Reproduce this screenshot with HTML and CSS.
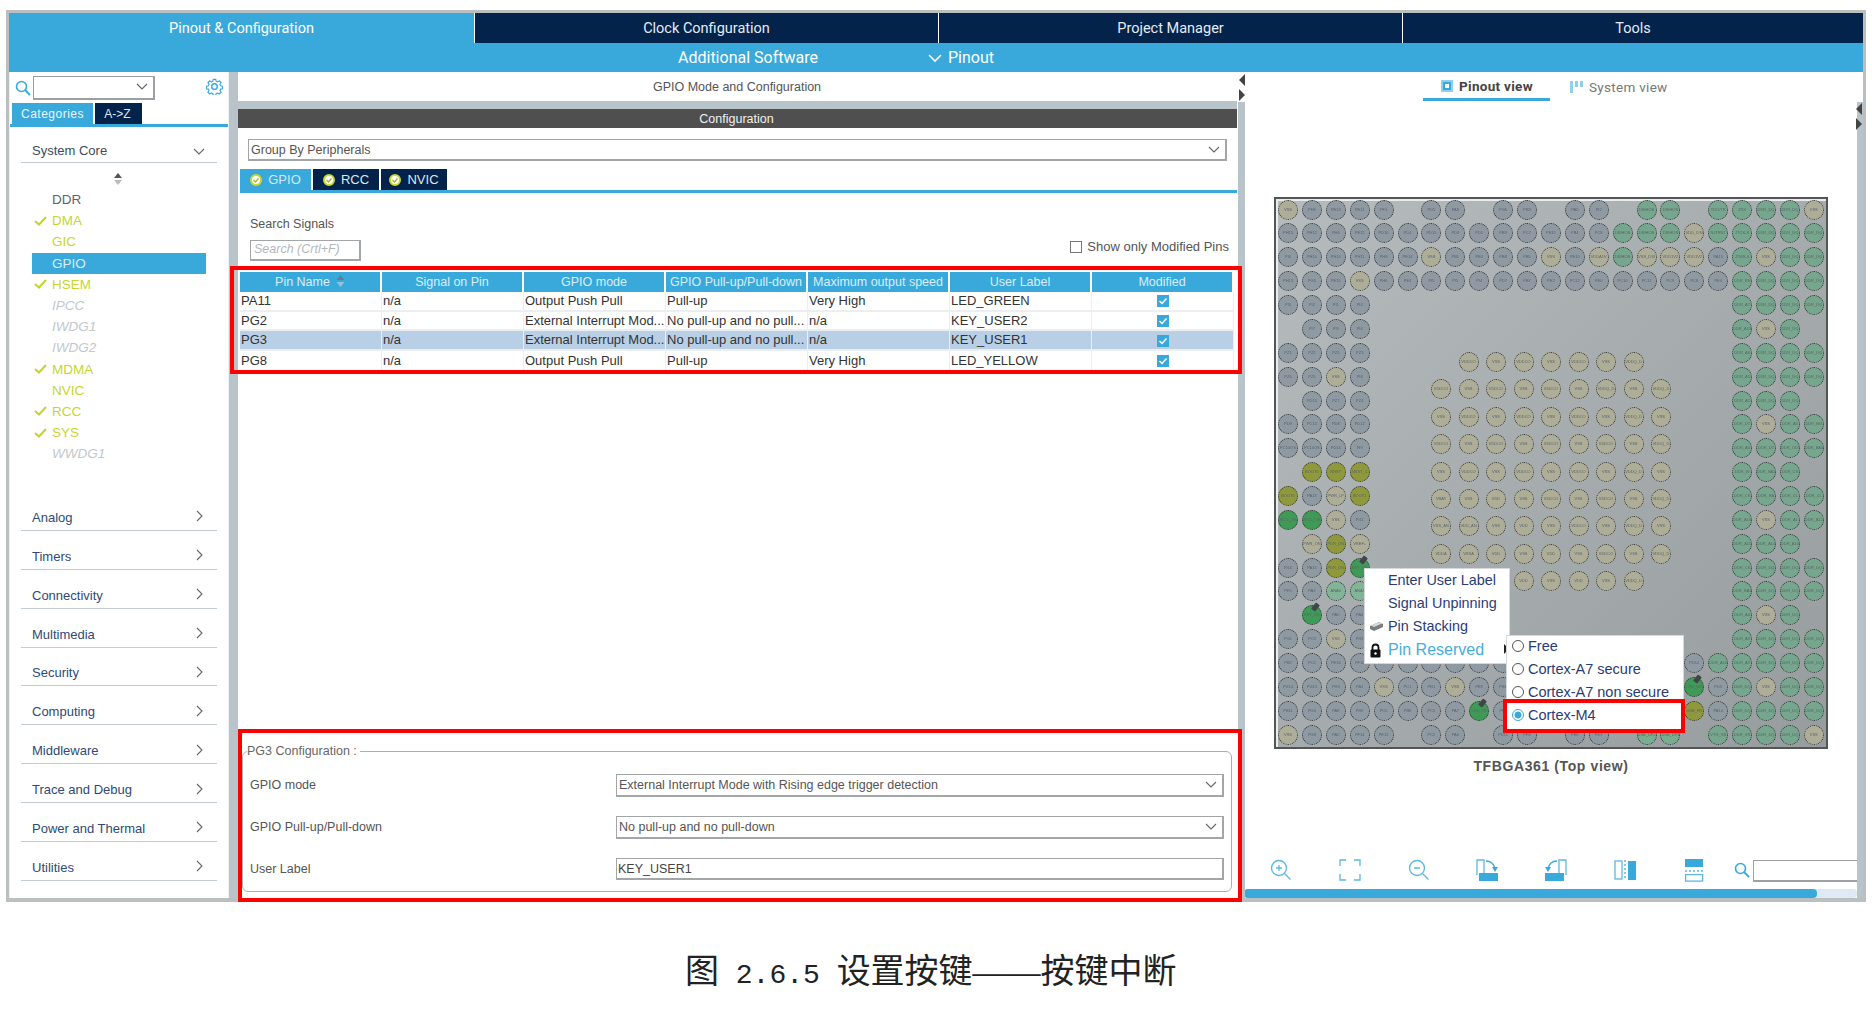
FILE: index.html
```html
<!DOCTYPE html>
<html lang="zh">
<head>
<meta charset="utf-8">
<title>GPIO Mode and Configuration</title>
<link rel="stylesheet" href="styles.css">
</head>
<body>
<div class="frame">
  <nav class="main-tabs">
    <div class="main-tab active">Pinout &amp; Configuration</div>
    <div class="main-tab">Clock Configuration</div>
    <div class="main-tab">Project Manager</div>
    <div class="main-tab">Tools</div>
  </nav>
  <div class="sub-bar">
    <span class="sub-software">Additional Software</span>
    <span class="sub-pinout"><svg width="14" height="10" viewBox="0 0 14 10"><path d="M1 2l6 6 6-6" fill="none" stroke="#fff" stroke-width="1.6"/></svg>Pinout</span>
  </div>
  <div class="workspace">
    <aside class="left-panel">
      <div class="search-row">
        <svg class="search-icon" width="16" height="16" viewBox="0 0 16 16"><circle cx="6.5" cy="6.5" r="5" fill="none" stroke="#39a9dc" stroke-width="1.6"/><path d="M10 10l5 5" stroke="#39a9dc" stroke-width="1.8"/></svg>
        <div class="combo"><svg width="12" height="8" viewBox="0 0 12 8"><path d="M1 1l5 5 5-5" fill="none" stroke="#666" stroke-width="1.2"/></svg></div>
        <svg class="gear" width="17" height="17" viewBox="0 0 24 24"><path d="M10 1.5h4l.6 3 2.3 1 2.6-1.7 2.8 2.8-1.7 2.6 1 2.3 3 .6v4l-3 .6-1 2.3 1.7 2.6-2.8 2.8-2.6-1.7-2.3 1-.6 3h-4l-.6-3-2.3-1-2.6 1.7-2.8-2.8 1.7-2.6-1-2.3-3-.6v-4l3-.6 1-2.3L1.7 6.6l2.8-2.8 2.6 1.7 2.3-1z" transform="translate(1.2 .6) scale(.9)" fill="none" stroke="#39a9dc" stroke-width="1.8"/><circle cx="12" cy="12" r="4" fill="none" stroke="#39a9dc" stroke-width="2"/></svg>
      </div>
      <div class="side-tabs">
        <span class="side-tab on">Categories</span>
        <span class="side-tab">A-&gt;Z</span>
      </div>
      <div class="accordion">
        <div class="cat-head first">System Core<svg width="12" height="8" viewBox="0 0 12 8"><path d="M1 1l5 5 5-5" fill="none" stroke="#666" stroke-width="1.1"/></svg></div>
        <div class="sorter"><svg width="10" height="12" viewBox="0 0 10 12"><path d="M5 0l4 5H1z" fill="#555"/><path d="M5 12L1 7h8z" fill="#bbb"/></svg></div>
        <ul class="ip-list">
          <li class="ip"><span class="ip-check"></span>DDR</li>
          <li class="ip ok"><span class="ip-check"><svg width="13" height="10" viewBox="0 0 13 10"><path d="M1 5l4 3.5L12 1" fill="none" stroke="#c3d52b" stroke-width="2"/></svg></span>DMA</li>
          <li class="ip ok"><span class="ip-check"></span>GIC</li>
          <li class="ip sel"><span class="ip-check"></span>GPIO</li>
          <li class="ip ok"><span class="ip-check"><svg width="13" height="10" viewBox="0 0 13 10"><path d="M1 5l4 3.5L12 1" fill="none" stroke="#c3d52b" stroke-width="2"/></svg></span>HSEM</li>
          <li class="ip off"><span class="ip-check"></span>IPCC</li>
          <li class="ip off"><span class="ip-check"></span>IWDG1</li>
          <li class="ip off"><span class="ip-check"></span>IWDG2</li>
          <li class="ip ok"><span class="ip-check"><svg width="13" height="10" viewBox="0 0 13 10"><path d="M1 5l4 3.5L12 1" fill="none" stroke="#c3d52b" stroke-width="2"/></svg></span>MDMA</li>
          <li class="ip ok"><span class="ip-check"></span>NVIC</li>
          <li class="ip ok"><span class="ip-check"><svg width="13" height="10" viewBox="0 0 13 10"><path d="M1 5l4 3.5L12 1" fill="none" stroke="#c3d52b" stroke-width="2"/></svg></span>RCC</li>
          <li class="ip ok"><span class="ip-check"><svg width="13" height="10" viewBox="0 0 13 10"><path d="M1 5l4 3.5L12 1" fill="none" stroke="#c3d52b" stroke-width="2"/></svg></span>SYS</li>
          <li class="ip off"><span class="ip-check"></span>WWDG1</li>
        </ul>
        <div class="cats">
          <div class="cat-head">Analog<svg width="8" height="12" viewBox="0 0 8 12"><path d="M1 1l5 5-5 5" fill="none" stroke="#666" stroke-width="1.1"/></svg></div>
          <div class="cat-head">Timers<svg width="8" height="12" viewBox="0 0 8 12"><path d="M1 1l5 5-5 5" fill="none" stroke="#666" stroke-width="1.1"/></svg></div>
          <div class="cat-head">Connectivity<svg width="8" height="12" viewBox="0 0 8 12"><path d="M1 1l5 5-5 5" fill="none" stroke="#666" stroke-width="1.1"/></svg></div>
          <div class="cat-head">Multimedia<svg width="8" height="12" viewBox="0 0 8 12"><path d="M1 1l5 5-5 5" fill="none" stroke="#666" stroke-width="1.1"/></svg></div>
          <div class="cat-head">Security<svg width="8" height="12" viewBox="0 0 8 12"><path d="M1 1l5 5-5 5" fill="none" stroke="#666" stroke-width="1.1"/></svg></div>
          <div class="cat-head">Computing<svg width="8" height="12" viewBox="0 0 8 12"><path d="M1 1l5 5-5 5" fill="none" stroke="#666" stroke-width="1.1"/></svg></div>
          <div class="cat-head">Middleware<svg width="8" height="12" viewBox="0 0 8 12"><path d="M1 1l5 5-5 5" fill="none" stroke="#666" stroke-width="1.1"/></svg></div>
          <div class="cat-head">Trace and Debug<svg width="8" height="12" viewBox="0 0 8 12"><path d="M1 1l5 5-5 5" fill="none" stroke="#666" stroke-width="1.1"/></svg></div>
          <div class="cat-head">Power and Thermal<svg width="8" height="12" viewBox="0 0 8 12"><path d="M1 1l5 5-5 5" fill="none" stroke="#666" stroke-width="1.1"/></svg></div>
          <div class="cat-head">Utilities<svg width="8" height="12" viewBox="0 0 8 12"><path d="M1 1l5 5-5 5" fill="none" stroke="#666" stroke-width="1.1"/></svg></div>
        </div>
      </div>
    </aside>
    <div class="gutter gutter-left"></div>
    <main class="center">
      <div class="center-title">GPIO Mode and Configuration</div>
      <div class="center-gap"></div>
      <div class="config-bar">Configuration</div>
      <div class="center-body">
        <div class="select group-select"><span>Group By Peripherals</span><svg width="12" height="8" viewBox="0 0 12 8"><path d="M1 1l5 5 5-5" fill="none" stroke="#666" stroke-width="1.1"/></svg></div>
        <div class="ip-tabs">
          <span class="ip-tab on"><svg width="12" height="12" viewBox="0 0 12 12"><circle cx="6" cy="6" r="5" fill="#fff" stroke="#c9d92f" stroke-width="2"/><path d="M3.5 6l2 2 3-3.6" fill="none" stroke="#a7b52a" stroke-width="1.4"/></svg>GPIO</span>
          <span class="ip-tab"><svg width="12" height="12" viewBox="0 0 12 12"><circle cx="6" cy="6" r="5" fill="#fff" stroke="#c9d92f" stroke-width="2"/><path d="M3.5 6l2 2 3-3.6" fill="none" stroke="#a7b52a" stroke-width="1.4"/></svg>RCC</span>
          <span class="ip-tab"><svg width="12" height="12" viewBox="0 0 12 12"><circle cx="6" cy="6" r="5" fill="#fff" stroke="#c9d92f" stroke-width="2"/><path d="M3.5 6l2 2 3-3.6" fill="none" stroke="#a7b52a" stroke-width="1.4"/></svg>NVIC</span>
        </div>
        <div class="search-signals">
          <div class="search-left">
            <div class="search-label">Search Signals</div>
            <div class="search-box">Search (Crtl+F)</div>
          </div>
          <label class="modified"><span class="box"></span>Show only Modified Pins</label>
        </div>
        <table class="pins-table">
          <thead>
            <tr><th>Pin Name<svg class="th-sort" width="9" height="12" viewBox="0 0 9 12"><path d="M4.5 0l4 5h-8z" fill="#5e7f95"/><path d="M4.5 12l-4-5h8z" fill="#8fc3de"/></svg></th><th>Signal on Pin</th><th>GPIO mode</th><th>GPIO Pull-up/Pull-down</th><th>Maximum output speed</th><th>User Label</th><th>Modified</th></tr>
          </thead>
          <tbody>
            <tr><td>PA11</td><td>n/a</td><td>Output Push Pull</td><td>Pull-up</td><td>Very High</td><td>LED_GREEN</td><td class="mod"><span class="tick"><svg width="12" height="12" viewBox="0 0 12 12"><path d="M2.5 6l2.5 2.5 4.5-5" fill="none" stroke="#fff" stroke-width="1.4"/></svg></span></td></tr>
            <tr><td>PG2</td><td>n/a</td><td>External Interrupt Mod...</td><td>No pull-up and no pull...</td><td>n/a</td><td>KEY_USER2</td><td class="mod"><span class="tick"><svg width="12" height="12" viewBox="0 0 12 12"><path d="M2.5 6l2.5 2.5 4.5-5" fill="none" stroke="#fff" stroke-width="1.4"/></svg></span></td></tr>
            <tr class="picked"><td>PG3</td><td>n/a</td><td>External Interrupt Mod...</td><td>No pull-up and no pull...</td><td>n/a</td><td>KEY_USER1</td><td class="mod"><span class="tick"><svg width="12" height="12" viewBox="0 0 12 12"><path d="M2.5 6l2.5 2.5 4.5-5" fill="none" stroke="#fff" stroke-width="1.4"/></svg></span></td></tr>
            <tr><td>PG8</td><td>n/a</td><td>Output Push Pull</td><td>Pull-up</td><td>Very High</td><td>LED_YELLOW</td><td class="mod"><span class="tick"><svg width="12" height="12" viewBox="0 0 12 12"><path d="M2.5 6l2.5 2.5 4.5-5" fill="none" stroke="#fff" stroke-width="1.4"/></svg></span></td></tr>
          </tbody>
        </table>
        <fieldset class="pin-config">
          <legend>PG3 Configuration :</legend>
          <div class="cfg-row"><span class="cfg-label">GPIO mode</span><div class="select cfg-field"><span>External Interrupt Mode with Rising edge trigger detection</span><svg width="12" height="8" viewBox="0 0 12 8"><path d="M1 1l5 5 5-5" fill="none" stroke="#666" stroke-width="1.1"/></svg></div></div>
          <div class="cfg-row"><span class="cfg-label">GPIO Pull-up/Pull-down</span><div class="select cfg-field"><span>No pull-up and no pull-down</span><svg width="12" height="8" viewBox="0 0 12 8"><path d="M1 1l5 5 5-5" fill="none" stroke="#666" stroke-width="1.1"/></svg></div></div>
          <div class="cfg-row"><span class="cfg-label">User Label</span><div class="select cfg-field text-field"><span>KEY_USER1</span></div></div>
        </fieldset>
      </div>
    </main>
    <div class="gutter gutter-mid"><div class="gutter-cap"><i class="tri-l"></i><i class="tri-r"></i></div></div>
    <section class="right">
      <div class="view-tabs">
        <span class="view-tab on"><svg width="14" height="14" viewBox="0 0 14 14"><rect x="1" y="1" width="12" height="12" fill="#8fd0ee"/><rect x="3" y="3" width="8" height="8" fill="#39a9dc"/><rect x="5" y="5" width="4" height="4" fill="#fff"/></svg>Pinout view</span>
        <span class="view-tab"><svg width="14" height="14" viewBox="0 0 14 14"><path d="M1 1h3v12H1z" fill="#8fd0ee"/><path d="M6 1h3v6H6zM11 1h3v6h-3z" fill="#8fd0ee"/></svg>System view</span>
      </div>
      <div class="chip" id="chip"></div>
      <div class="chip-name">TFBGA361 (Top view)</div>
      <div class="toolbar">
        <span class="tool"><svg width="24" height="24" viewBox="0 0 24 24" fill="none" stroke="#5bb8e3" stroke-width="1.3"><circle cx="10" cy="10" r="7.5"/><path d="M15.5 15.5l6 6M7 10h6M10 7v6"/></svg></span>
        <span class="tool"><svg width="24" height="24" viewBox="0 0 24 24" fill="none" stroke="#5bb8e3" stroke-width="1.3"><path d="M8 2H2v6M16 2h6v6M8 22H2v-6M16 22h6v-6"/></svg></span>
        <span class="tool"><svg width="24" height="24" viewBox="0 0 24 24" fill="none" stroke="#5bb8e3" stroke-width="1.3"><circle cx="10" cy="10" r="7.5"/><path d="M15.5 15.5l6 6M7 10h6"/></svg></span>
        <span class="tool"><svg width="24" height="24" viewBox="0 0 24 24"><path d="M2 17V2h7v13" fill="none" stroke="#5bb8e3" stroke-width="1.3"/><rect x="4" y="15" width="19" height="8" fill="#39a9dc"/><path d="M11 3c5 0 8 3 9 8" fill="none" stroke="#39a9dc" stroke-width="1.3"/><path d="M17 9h6l-3 5z" fill="#39a9dc"/></svg></span>
        <span class="tool"><svg width="24" height="24" viewBox="0 0 24 24"><path d="M22 17V2h-7v13" fill="none" stroke="#5bb8e3" stroke-width="1.3"/><rect x="1" y="15" width="19" height="8" fill="#39a9dc"/><path d="M13 3c-5 0-8 3-9 8" fill="none" stroke="#39a9dc" stroke-width="1.3"/><path d="M1 9h6l-3 5z" fill="#39a9dc"/></svg></span>
        <span class="tool"><svg width="24" height="24" viewBox="0 0 24 24"><rect x="2" y="3" width="7" height="18" fill="none" stroke="#5bb8e3" stroke-width="1.3"/><path d="M12 2v20" stroke="#5bb8e3" stroke-width="1.5" stroke-dasharray="2 2"/><rect x="15" y="3" width="8" height="19" fill="#39a9dc"/></svg></span>
        <span class="tool"><svg width="24" height="24" viewBox="0 0 24 24"><rect x="3" y="1" width="18" height="8" fill="#39a9dc"/><path d="M3 13h18" stroke="#5bb8e3" stroke-width="1.5" stroke-dasharray="2 2"/><rect x="3.6" y="16.6" width="17" height="6.5" fill="none" stroke="#5bb8e3" stroke-width="1.3"/></svg></span>
        <span class="tool-search"><svg width="16" height="16" viewBox="0 0 16 16"><circle cx="6.5" cy="6.5" r="5" fill="none" stroke="#39a9dc" stroke-width="1.6"/><path d="M10 10l5 5" stroke="#39a9dc" stroke-width="1.8"/></svg></span>
        <span class="tool-input"></span>
      </div>
      <div class="hscroll"><div class="hthumb"></div></div>
    </section>
    <div class="gutter gutter-right"><div class="gutter-cap"></div><div class="gutter-arrows"><i class="tri-l"></i><i class="tri-r"></i></div></div>
  </div>

  <div class="redbox red-table"></div>
  <div class="redbox red-config"></div>

  <div class="menu">
    <div class="menu-item">Enter User Label</div>
    <div class="menu-item">Signal Unpinning</div>
    <div class="menu-item"><svg class="menu-icon" width="15" height="12" viewBox="0 0 15 12"><path d="M1 6l9-4 4 2v3l-9 4-4-2z" fill="#7c7c7c"/><path d="M2 5.5l8-3.5 3 1.5-8 3.5z" fill="#d8d8d8"/></svg>Pin Stacking</div>
    <div class="menu-item accent"><svg class="menu-icon" width="13" height="15" viewBox="0 0 13 15"><path d="M3.5 7V4.5a3 3 0 0 1 6 0V7" fill="none" stroke="#111" stroke-width="1.8"/><rect x="1.5" y="6.5" width="10" height="8" rx="1" fill="#111"/><circle cx="6.5" cy="10.5" r="1.2" fill="#fff"/></svg>Pin Reserved</div>
    <i class="menu-arrow"></i>
  </div>
  <div class="submenu">
    <div class="sub-item"><span class="radio"></span>Free</div>
    <div class="sub-item"><span class="radio"></span>Cortex-A7 secure</div>
    <div class="sub-item"><span class="radio"></span>Cortex-A7 non secure</div>
    <div class="sub-item"><span class="radio checked"></span>Cortex-M4</div>
  </div>
  <div class="redbox red-m4"></div>
</div>
<p class="caption">图<span class="cap-num"> 2.6.5 </span>设置按键——按键中断</p>
<script src="pins.js"></script>
</body>
</html>
```

FILE: styles.css
```css
* { box-sizing: border-box; }
html, body { margin: 0; padding: 0; background: #fff; }
body { font-family: "Liberation Sans", Arial, sans-serif; font-size: 13px; color: #444; width: 1872px; height: 1017px; overflow: hidden; padding: 10px 6px 0; }
ul { list-style: none; margin: 0; padding: 0; }

.frame { position: relative; width: 1860px; height: 892px; border: 3px solid #bcbfc0; border-bottom-width: 4px; background: #fff; display: flex; flex-direction: column; }

.main-tabs { display: flex; height: 30px; background: #39a9dc; }
.main-tab { width: 464px; display: flex; align-items: center; justify-content: center; background: #03234b; color: #e6ebf2; border-left: 1px solid #fff; font: 14.5px Roboto, "Liberation Sans", sans-serif; }
.main-tab.active { width: 465px; background: #39a9dc; color: #fff; border-left: 0; }
.main-tab:last-child { flex: 1; }
.sub-bar { height: 29px; background: #39a9dc; color: #fff; display: flex; align-items: center; font: 16px Roboto, "Liberation Sans", sans-serif; padding-left: 669px; }
.sub-software { width: 250px; }
.sub-pinout { display: flex; align-items: center; gap: 6px; }

.workspace { flex: 1; min-height: 0; display: flex; }

.left-panel { width: 220px; background: #fff; border-right: 1px solid #eef1f3; border-left: 1px solid #eef1f3; display: flex; flex-direction: column; }
.search-row { height: 31px; display: flex; align-items: center; padding-left: 5px; }
.search-icon { flex: none; }
.combo { width: 122px; height: 24px; margin-left: 2px; border: 1px solid #9c9fa3; border-width: 1px 2px 2px 1px; display: flex; align-items: center; justify-content: flex-end; padding-right: 5px; }
.gear { margin-left: 51px; margin-top: -2px; }
.side-tabs { height: 24px; display: flex; gap: 2px; border-bottom: 3px solid #39a9dc; padding-left: 2px; }
.side-tab { width: 47px; background: #03234b; color: #dfe6ee; display: flex; align-items: center; justify-content: center; font-size: 12px; padding-right: 2px; }
.side-tab.on { width: 81px; background: #39a9dc; color: #eaf6fc; letter-spacing: .5px; padding-right: 0; }
.accordion { padding: 0 11px 0 11px; }
.cat-head { height: 38.9px; display: flex; align-items: flex-end; justify-content: space-between; padding: 0 13px 4px 11px; border-bottom: 1px solid #c4ccd3; color: #2e4a78; font-size: 13px; line-height: 16px; }
.cat-head svg { margin-bottom: 3.5px; }
.cat-head.first { height: 36px; color: #3a4b63; padding: 0 12px 3px 11px; }
.sorter { height: 27px; display: flex; align-items: center; justify-content: center; padding-top: 5px; margin-right: 2px; }
.ip-list { margin: -1px 0 0 11px; width: 174px; }
.ip { height: 21.2px; display: flex; align-items: center; color: #5b6470; font-size: 13.5px; }
.ip-check { width: 20px; flex: none; display: flex; align-items: center; padding-left: 2px; }
.ip.ok { color: #c6d62f; }
.ip.sel { background: #39a9dc; color: #d9edf7; }
.ip.off { color: #c4c8cc; font-style: italic; }
.cats { margin-top: 27.5px; }

.gutter { flex: none; background: #b8c3ca; }
.gutter-left { width: 9px; }
.gutter-mid { width: 7px; margin-left: 1px; }
.gutter-right { width: 6px; }
.gutter-cap { height: 30px; background: #fff; display: flex; flex-direction: column; align-items: center; justify-content: center; gap: 3px; }
.gutter-arrows { display: flex; flex-direction: column; align-items: center; gap: 3px; padding-top: 1px; position: relative; left: -1px; }
.tri-l { width: 0; height: 0; border: 6.5px solid transparent; border-right: 6px solid #444; border-left: 0; display: block; }
.tri-r { width: 0; height: 0; border: 6.5px solid transparent; border-left: 6px solid #444; border-right: 0; display: block; }

.center { width: 999px; display: flex; flex-direction: column; background: #fff; }
.center-title { height: 29px; display: flex; align-items: center; justify-content: center; font-size: 12.5px; color: #555; padding-right: 1px; }
.center-gap { height: 8px; background: #b8c3ca; }
.config-bar { height: 19px; background: #4f4f4f; color: #f0f0f0; display: flex; align-items: center; justify-content: center; font-size: 12.5px; flex: none; padding-right: 2px; }
.center-body { flex: 1; display: flex; flex-direction: column; padding: 11px 0 6px 2px; min-height: 0; }
.select { border: 1px solid #a3a6a9; border-bottom-width: 2px; border-right-width: 2px; display: flex; align-items: center; justify-content: space-between; padding: 0 5px 0 2px; color: #555; white-space: nowrap; }
.group-select { height: 22px; margin: 0 10px 0 8px; font-size: 12.5px; }
.ip-tabs { display: flex; gap: 2px; height: 24px; margin-top: 8px; border-bottom: 3px solid #39a9dc; }
.ip-tab { width: 66px; height: 21px; background: #03234b; color: #dfe6ee; display: flex; align-items: center; justify-content: center; gap: 6px; font-size: 13px; }
.ip-tab.on { width: 71px; background: #39a9dc; color: #cfeaf7; }
.search-signals { height: 78px; display: flex; justify-content: space-between; align-items: flex-end; padding: 0 8px 10px 10px; }
.search-label { color: #555; font-size: 12.5px; margin-bottom: 9px; }
.search-box { width: 111px; height: 21px; border: 1px solid #a3a6a9; border-width: 1px 2px 2px 1px; font-style: italic; color: #b4b8bc; font-size: 12.5px; padding: 1px 3px; white-space: nowrap; }
.modified { display: flex; align-items: center; gap: 5px; color: #555; font-size: 13px; margin-bottom: 7px; }
.box { width: 12px; height: 12px; border: 1px solid #777; display: block; }

.pins-table { width: 994px; border-collapse: separate; border-spacing: 0; table-layout: fixed; font-size: 13px; flex: none; margin-top: 1px; }
.pins-table th { height: 20px; padding: 0 2px; background: #39a9dc; color: #d8eef9; font-weight: 400; font-size: 12.5px; border-right: 2px solid #fff; white-space: nowrap; overflow: hidden; }
.pins-table td { height: 19.7px; padding: 0 1px; line-height: 16px; border-right: 1px solid #eceff2; border-bottom: 2px solid #eceff2; color: #333; white-space: nowrap; overflow: hidden; }
.pins-table tr:last-child td { border-bottom: 0; }
.pins-table .picked td { background: #b8cfe6; }
.th-sort { margin-left: 6px; vertical-align: -1px; }
.mod { text-align: center; }
.tick { display: inline-flex; width: 12px; height: 12px; background: #39a9dc; vertical-align: middle; }

.pin-config { margin: auto 0 0 2px; width: 990px; height: 148px; border: 1px solid #a9afb5; border-radius: 6px; padding: 6px 6px 0 7px; }
.pin-config legend { padding: 0 3px 0 0; margin-left: -3px; color: #666; font-size: 12.5px; line-height: 14px; }
.cfg-row { display: flex; align-items: center; height: 42px; }
.cfg-label { width: 366px; color: #555; font-size: 12.5px; flex: none; }
.cfg-field { width: 608px; height: 23px; font-size: 12.5px; }
.text-field { padding-left: 1px; height: 22px; color: #444; }

.right { width: 612px; flex: none; display: flex; flex-direction: column; min-height: 0; overflow: hidden; background: #fff; }
.view-tabs { height: 29px; display: flex; padding-left: 178px; gap: 19px; flex: none; }
.view-tab { width: 127px; height: 29px; display: flex; align-items: center; justify-content: center; gap: 5px; font: 13.5px Roboto, "Liberation Sans", sans-serif; color: #777; white-space: nowrap; letter-spacing: .3px; }
.view-tab.on { font-weight: 700; color: #444; border-bottom: 3px solid #39a9dc; padding-top: 2px; }
.view-tab:not(.on) { width: 110px; justify-content: flex-start; gap: 6px; }

.chip { position: relative; flex: none; width: 554px; height: 552px; margin: 96px 0 0 29px; background: linear-gradient(135deg, #b6bbbe 0%, #a6abae 50%, #979c9e 100%); border: 2px solid #555; box-shadow: inset 1px 1px 0 1px #e8ecee; }
.pin { position: absolute; width: 20px; height: 20px; border-radius: 50%; border: 1px dotted #2e2e2e; background: #8f99a2; color: #5c6268; font-size: 4px; line-height: 18px; text-align: center; white-space: nowrap; overflow: hidden; filter: blur(.35px); }
.pin.pw { background: #aeae98; }
.pin.ddr { background: #76a68d; }
.pin.sig { background: #409a57; }
.pin.boot { background: #8f993c; }
.pin.ana { background: #84b498; }
.pin.usb { background: #79ad90; }
.pinmark { position: absolute; width: 5px; height: 8px; background: #3f4548; border-radius: 1px; transform: rotate(40deg); }
.chip-name { flex: none; margin: 9px 0 0; width: 612px; text-align: center; font-weight: 700; font-size: 14px; color: #555; letter-spacing: .6px; }

.toolbar { margin-top: auto; display: flex; align-items: center; height: 24px; flex: none; padding-left: 1px; position: relative; top: -2px; }
.tool { width: 69px; flex: none; display: flex; justify-content: center; }
.tool:nth-child(n+4) { position: relative; left: -1px; }
.tool-search { margin-left: 5px; flex: none; display: flex; }
.tool-input { width: 110px; height: 22px; margin-left: 3px; border: 1px solid #9ea1a4; border-width: 1px 0 2px 1px; flex: none; position: relative; top: 1px; }
.hscroll { margin: 5px 0 0 -1px; height: 9px; flex: none; background: #dde9f5; border-radius: 4px; width: 613px; }
.hthumb { width: 573px; height: 9px; background: #39a9dc; border-radius: 4px; }

.redbox { position: absolute; border: 4px solid #f00; pointer-events: none; }
.red-table { left: 221px; top: 253px; width: 1012px; height: 108px; }
.red-config { left: 229px; top: 716px; width: 1004px; height: 173px; }
.red-m4 { left: 1494px; top: 686px; width: 182px; height: 34px; }

.menu { position: absolute; left: 1355px; top: 555px; width: 146px; height: 96px; background: #fff; border: 1px solid #d5d8da; color: #2a3c78; font-size: 14.4px; }
.menu-item { height: 23.4px; padding: 0 0 2px 23px; display: flex; align-items: center; position: relative; }
.menu-icon { position: absolute; left: 4px; top: 4px; }
.menu-item.accent { color: #45aee0; font-size: 16px; }
.menu-arrow { position: absolute; right: 0; bottom: 9px; width: 0; height: 0; border: 5px solid transparent; border-left: 5px solid #222; border-right: 0; }
.submenu { position: absolute; left: 1497px; top: 622px; width: 178px; height: 95px; background: #fff; border: 1px solid #d5d8da; color: #2a3c78; font-size: 14.5px; }
.sub-item { height: 23px; display: flex; align-items: center; gap: 4px; padding: 0 0 4px 5px; }
.radio { width: 12px; height: 12px; border-radius: 50%; border: 1px solid #555; display: block; background: #fff; flex: none; }
.radio.checked { border-color: #39a9dc; background: radial-gradient(circle, #39a9dc 0 3.2px, #fff 3.8px); }

.caption { margin: 50px 0 0 679px; width: 520px; font: 34px "Liberation Serif", "Noto Sans CJK SC", serif; color: #222; white-space: nowrap; line-height: 40px; }
.cap-num { font-family: "Liberation Mono", monospace; font-size: 28px; white-space: pre; }
```

FILE: pins.js
```js
(function () {
  var chip = document.getElementById('chip');
  var outer = [
    'VSS PH9 PE13 PE11 PF1 - PD5 PA8 - PG6 PB3 - PA0 PI2 - DSIHOS DSIHOS - TDO/TR JTDI DDR_DQ DDR_DQ VSS',
    'PH15 PH12 PH4 PE12 PD10 PD4 PD15 PD8 PD1 PB9 PC7 PE15 PB4 PC8 DSIHOS DSIHOS DSIHOS VDD_DSI NJTRST JTCK-S DDR_DQ DDR_DQ DDR_DQ',
    'PI0 PH10 PH14 PH11 PH8 PE14 VSS PB1 PB3 PB8 PB5 VSS PE10 VDDA1V DSIHOS VSS_DSI VDD1V2 VDD1V2 PA15 JTMS-S VSS DDR_DQ DDR_DQ',
    'PH13 PG5 PE15 VSS PH6 PE3 PI5 PI5 PI4 PD7 PB7 PE2 PC12 PE0 PC10 PC11 PC9 PC8 PE4 DDR_RE DDR_DQ DDR_DQ DDR_DQ',
    'PI3 PI2 PI1 PI4 - - - - - - - - - - - - - - - DDR_A7 DDR_DQ DDR_DQ DDR_DQ',
    '- PI7 PI9 PI6 - - - - - - - - - - - - - - - DDR_A13 VSS DDR_DQ -',
    'PZ1 PZ2 PZ0 PZ3 - - - - - - - - - - - - - - - DDR_A8 DDR_DQ DDR_DQ DDR_DQ',
    'PZ6 PZ5 VSS PI8 - - - - - - - - - - - - - - - DDR_A5 DDR_DQ DDR_DQ DDR_DQ',
    '- PD15 PZ7 PZ4 - - - - - - - - - - - - - - - DDR_A2 DDR_DQ DDR_DQ -',
    'PD9 PC13 PD8 PD12 - - - - - - - - - - - - - - - DDR_DT VSS DDR_A3 DDR_BG',
    'PC15OS PC14OS PD14 PI9 - - - - - - - - - - - - - - - DDR_A4 DDR_DT DDR_ODT DDR_BA0',
    '- BOOT0 NRST NRST_C - - - - - - - - - - - - - - - DDR_W DDR_BA2 DDR_CS -',
    'BOOT0 PA13 PWR_LP BOOT1 - - - - - - - - - - - - - - - DDR_CK DDR_RA DDR_CL DDR_CL',
    'RCC_OS RCC_OS VSS PI11 - - - - - - - - - - - - - - - DDR_A15 VSS DDR_A1 DDR_A12',
    '- PWR_ON PDR_ON VREF+ - - - - - - - - - - - - - - - DDR_A11 DDR_A14 DDR_A10 -',
    'PI10 PA15 PDR_ON KEY_US - - - - - - - - - - - - - - - DDR_CK DDR_DQ DDR_DQ DDR_DQ',
    'PF5 PA3 ANA0 ANA1 - - - - - - - - - - - - - - - DDR_BA1 DDR_DQ DDR_DQ DDR_DQ',
    '- KEY_US PA5 PA4 - - - - - - - - - - - - - - - DDR_A6 VSS DDR_DQ -',
    'PG1 PC3 VSS PH1 - - - - - - - - - - - - - - - DDR_A9 DDR_DQ DDR_DQ DDR_DQ',
    'PB2 PC2 PE16 PF10 PF12 PF13 PA6 PA4 PG0 PE7 - - - - - - - PD12 DDR_A10 DDR_A9 DDR_DQ DDR_DQ DDR_DQ',
    'PG14 PG13 PH3 PA1 VSS PC1 PB1 VSS PB9 PB6 - - - - - - - LED_GR PD3 DDR_DQ VSS DDR_DQ DDR_DQ',
    'PB11 PG4 PA8 PH2 PC6 PB8 PC5 PA7 LED_YE PF7 - - - - - - - USB_FR PA10 DDR_DQ DDR_DQ DDR_DQ DDR_DQ',
    'VSS PG8 PA2 PF14 PE12 - PC2 PA6 - PD11 PF6 - PE8 PD7 - USB_DP2 USB_DP1 - VTG_VB DDR_VR DDR_DQ DDR_DQ VSS'
  ];
  var inner = [
    '- VDDCO VSS VDDCO VSS VDDCO VSS VDDQ_D -',
    'VDDCO VSS VDDCO VSS VDDCO VSS VDDQ_D VSS VDDQ_D',
    'VSS VDDCO VSS VDDCO VSS VDDCO VSS VDDQ_D VSS',
    'VDDCO VSS VDDCO VSS VDDCO VSS VDDCO VSS VDDQ_D',
    'VSS VDDCO VSS VDDCO VSS VDDCO VSS VDDQ_D VSS',
    'VBAT VSS VDD VSS VDDCO VSS VDDCO VSS VDDQ_D',
    'VSS_AN VDD_AN VSS VDD VSS VDDCO VSS VDDQ_D VSS',
    'VDDA VSSA VDD VSS VDD VSS VDDCO VSS VDDQ_D',
    '- - - VDD VSS VDD VSS VDDQ_D -'
  ];
  function kind(n) {
    if (/^(KEY|LED|RCC)/.test(n)) return 'sig';
    if (/^(BOOT|NRST|PDR|USB_FR)/.test(n)) return 'boot';
    if (/^ANA/.test(n)) return 'ana';
    if (/^USB_DP/.test(n)) return 'usb';
    if (/^(DDR|DSI|JT|NJ|TDO|VTG)/.test(n)) return 'ddr';
    if (/^(V|PWR)/.test(n)) return 'pw';
    return '';
  }
  function place(n, cx, cy) {
    if (n === '-') return;
    var d = document.createElement('div');
    d.className = 'pin ' + kind(n);
    d.textContent = n;
    d.style.left = (cx - 10).toFixed(1) + 'px';
    d.style.top = (cy - 10).toFixed(1) + 'px';
    chip.appendChild(d);
    if (/^(KEY|LED)/.test(n)) {
      var m = document.createElement('div');
      m.className = 'pinmark';
      m.style.left = (cx + 1).toFixed(1) + 'px';
      m.style.top = (cy - 12).toFixed(1) + 'px';
      chip.appendChild(m);
    }
  }
  outer.forEach(function (row, r) {
    row.split(' ').forEach(function (n, c) { place(n, 12 + c * 23.9, 10.5 + r * 23.87); });
  });
  inner.forEach(function (row, r) {
    row.split(' ').forEach(function (n, c) { place(n, 165 + c * 27.5, 163 + r * 27.4); });
  });
})();
```
